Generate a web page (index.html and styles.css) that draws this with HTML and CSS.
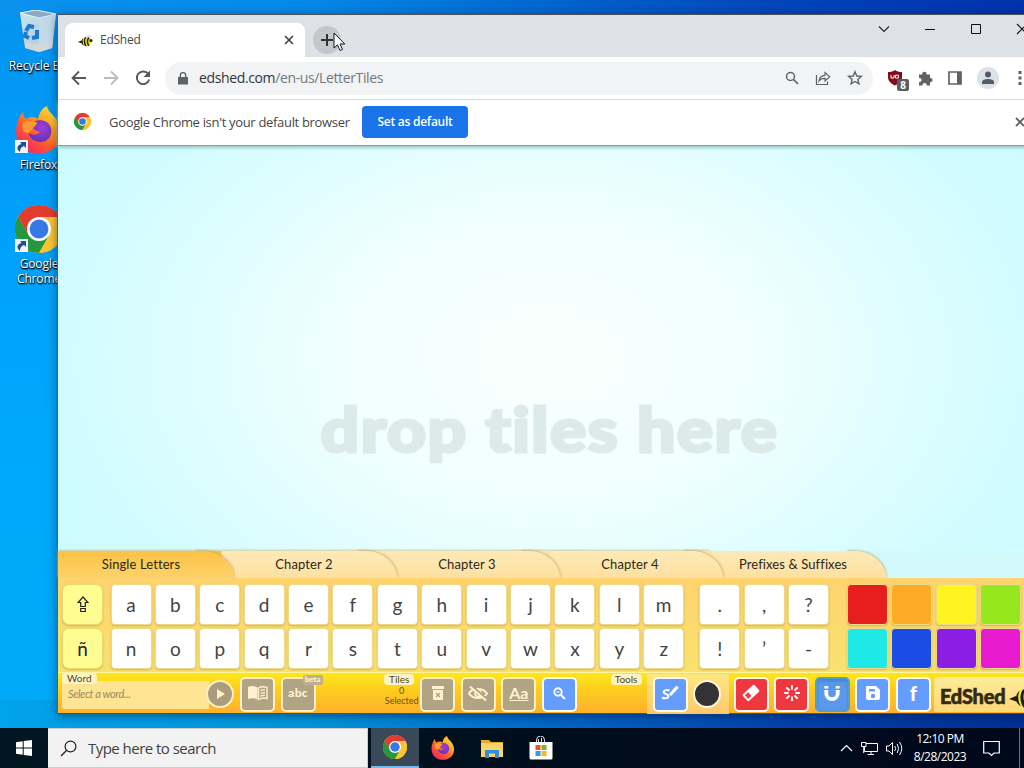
FILE: index.html
```html
<!DOCTYPE html>
<html lang="en">
<head>
<meta charset="utf-8">
<title>EdShed Letter Tiles</title>
<link rel="stylesheet" href="styles.css">
</head>
<body>
<svg class="defs" width="0" height="0">
  <defs>
    <linearGradient id="ffBody" x1="1" y1="0" x2="0.2" y2="1"><stop offset="0" stop-color="#fff04a"/><stop offset=".35" stop-color="#ffae22"/><stop offset=".65" stop-color="#ff5a30"/><stop offset="1" stop-color="#f0246c"/></linearGradient>
    <radialGradient id="ffCore" cx=".6" cy=".35" r=".7"><stop offset="0" stop-color="#a53bd8"/><stop offset="1" stop-color="#5b35b5"/></radialGradient>
    <linearGradient id="bin" x1="0" y1="0" x2="1" y2="1"><stop offset="0" stop-color="#cfe4f0"/><stop offset=".6" stop-color="#b4cfe0"/><stop offset="1" stop-color="#dfe6ea"/></linearGradient>
  </defs>
  <symbol id="chrome" viewBox="0 0 48 48">
    <circle cx="24" cy="24" r="24" fill="#fbc532"/>
    <path d="M3.2 12A24 24 0 0 1 44.8 12H24L13.6 30Z" fill="#e33b2e"/>
    <path d="M3.2 12A24 24 0 0 0 24 48L34.4 30L24 24L13.6 30Z" fill="#24973f"/>
    <path d="M24 48L34.4 30L24 12H44.8A24 24 0 0 1 24 48Z" fill="#fbc532"/>
    <circle cx="24" cy="24" r="12" fill="#fff"/><circle cx="24" cy="24" r="9.4" fill="#3878e4"/>
  </symbol>
  <symbol id="firefox" viewBox="0 0 48 48">
    <path d="M3 15C4 10 7 7 8 6C8 9 9 11 11 13C16 10 20 11 23 13C24 7 27 2 32 0C33 6 38 8 42 14C49 25 47 38 37 44C25 51 8 48 3 35C0 28 1 20 3 15Z" fill="url(#ffBody)"/>
    <path d="M15 20C19 12 33 12 36 22C38 31 31 37 24 36C18 35 14 31 14 27C18 30 22 29 25 26C20 25 19 22 15 20Z" fill="url(#ffCore)"/>
    <path d="M8 17C13 14 19 15 23 17C20 19 20 21 18 22C16 25 15 26 13 27C7 27 7 21 8 17Z" fill="#ff9a2c"/>
  </symbol>
  <symbol id="shortcut" viewBox="0 0 13 13">
    <path d="M0 0H13V13H0Z" fill="#f2f6fa"/><path d="M5 2H11V8L9 6C6 7 5 9 5 12C1 9 2 5 6.5 4Z" fill="#1d4f9a"/>
  </symbol>
  <symbol id="bee" viewBox="0 0 30 24">
    <ellipse cx="22" cy="5" rx="4" ry="5" fill="#dde3dd" transform="rotate(25 22 5)"/>
    <path d="M0 15L7 12C10 5 17 3 23 7C29 11 28 19 23 22C16 25 9 22 6 17Z" fill="#f3e81c"/>
    <path d="M0 15L7 12L8 18L6 17ZM11 6.500C8 11 9 18 12 22.500L9 20C6.500 17 6.500 11 9 8.500ZM17 4.500C13 10 14 18 18 23.500H14.500C10.500 18 10.500 10 14 5.500ZM23 7C19 12 20 18 23 22L20.500 23C16.500 18 16.500 11 20 5.500Z" fill="#1a1a12"/>
    <circle cx="26" cy="12" r="3" fill="#22220f"/>
  </symbol>
</svg>

<div class="desktop">
  <div class="shortcuts">
    <div class="shortcut">
      <svg width="38" height="43" viewBox="0 0 38 43"><path d="M1 3L17 0L37 4L33 38L20 42L6 38Z" fill="url(#bin)"/><path d="M1 3L17 0L37 4L20 8Z" fill="#89abc1" stroke="#e6f2f8"/><path d="M20 8L37 4L33 38L20 42Z" fill="#c4dbea" opacity=".8"/><path d="M6 32L20 35L34 32L33 38L20 42L6 38Z" fill="#d8d8d4" opacity=".8"/><g fill="none" stroke="#1d78cf" stroke-width="4"><path d="M7 21L10 16L15 17"/><path d="M18 20L18 27L13 28"/><path d="M10 28L6 26L7 22"/></g></svg>
      <span class="bin-label">Recycle Bin</span>
    </div>
    <div class="shortcut ff">
      <span class="pic"><svg width="48" height="48"><use href="#firefox"/></svg><svg class="arrow" width="13" height="13"><use href="#shortcut"/></svg></span>
      <span>Firefox</span>
    </div>
    <div class="shortcut gc">
      <span class="pic"><svg width="48" height="48"><use href="#chrome"/></svg><svg class="arrow" width="13" height="13"><use href="#shortcut"/></svg></span>
      <span>Google<br>Chrome</span>
    </div>
  </div>

  <div class="window">
    <div class="tabstrip">
      <div class="tab">
        <svg width="15" height="13" viewBox="0 0 30 24"><use href="#bee"/></svg>
        <span class="tab-title">EdShed</span>
        <svg width="10" height="10" viewBox="0 0 10 10"><path d="M1 1L9 9M9 1L1 9" stroke="#3c4043" stroke-width="1.6"/></svg>
      </div>
      <span class="newtab"><svg width="14" height="14" viewBox="0 0 14 14"><path d="M7 1V13M1 7H13" stroke="#333" stroke-width="2"/></svg></span>
      <div class="winctl">
        <svg width="12" height="12" viewBox="0 0 12 12"><path d="M1 3.5L6 8.5L11 3.5" fill="none" stroke="#222" stroke-width="1.1"/></svg>
        <svg width="12" height="12" viewBox="0 0 12 12"><path d="M1 6.5H11" stroke="#111"/></svg>
        <svg width="12" height="12" viewBox="0 0 12 12"><path d="M1.5 1.5H10.5V10.5H1.5Z" fill="none" stroke="#111"/></svg>
        <svg width="12" height="12" viewBox="0 0 12 12"><path d="M1 1L11 11M11 1L1 11" stroke="#111" stroke-width="1.1"/></svg>
      </div>
    </div>

    <div class="navbar">
      <div class="navbtns">
        <svg width="16" height="16" viewBox="0 0 16 16"><path d="M15 8H2M8 1.5L1.5 8L8 14.5" fill="none" stroke="#55585b" stroke-width="1.8"/></svg>
        <svg width="16" height="16" viewBox="0 0 16 16"><path d="M1 8H14M8 1.5L14.5 8L8 14.5" fill="none" stroke="#b9bbbd" stroke-width="1.8"/></svg>
        <svg width="16" height="16" viewBox="0 0 16 16"><path d="M13.2 4A6.3 6.3 0 1 0 14.2 9.5" fill="none" stroke="#55585b" stroke-width="1.9"/><path d="M15 .5V7H8.5Z" fill="#55585b"/></svg>
      </div>
      <div class="omnibox">
        <svg width="10" height="13" viewBox="0 0 10 13"><path d="M0 5H10V12.5H0Z" fill="#5f6368"/><path d="M2.3 5V3.3A2.7 2.7 0 0 1 7.7 3.3V5" fill="none" stroke="#5f6368" stroke-width="1.4"/></svg>
        <span class="url">edshed.com<i>/en-us/LetterTiles</i></span>
        <svg class="first" width="14" height="14" viewBox="0 0 14 14"><circle cx="5.5" cy="5.5" r="4" fill="none" stroke="#5f6368" stroke-width="1.5"/><path d="M8.5 8.5L13 13" stroke="#5f6368" stroke-width="1.7"/></svg>
        <svg width="16" height="16" viewBox="0 0 16 16"><path d="M1.5 5V14.5H12.5V11.5M4 11C4.5 7 6.5 5.5 10 5.3V2.5L14.8 6.8L10 11V8.3C7.5 8.2 5.5 9 4 11Z" fill="none" stroke="#5f6368" stroke-width="1.2"/></svg>
        <svg width="16" height="16" viewBox="0 0 16 16"><path d="M8 1.8L9.8 6L14.3 6.4L10.9 9.4L11.9 13.8L8 11.5L4.1 13.8L5.1 9.4L1.7 6.4L6.2 6Z" fill="none" stroke="#5f6368" stroke-width="1.4"/></svg>
      </div>
      <div class="exts">
        <span class="ublock"><svg width="14" height="16" viewBox="0 0 14 16"><path d="M7 0C9 1.5 11 2 14 2V7C14 11 11 13.500 7 15.500C3 13.500 0 11 0 7V2C3 2 5 1.500 7 0Z" fill="#800d17"/><path d="M3 5V8H6V5M7.500 5.200H10.500V8H7.500Z" fill="none" stroke="#fff"/></svg><b>8</b></span>
        <svg width="15" height="15" viewBox="0 0 15 15"><path d="M1 3.500H4.200V3A2.200 2.200 0 0 1 8.600 3V3.500H12V7H12.500A2.100 2.100 0 0 1 12.500 11.200H12V14.500H8.700V14A2.100 2.100 0 0 0 4.500 14V14.500H1V11H1.500A2 2 0 0 0 1.500 7H1Z" fill="#5f6368"/></svg>
        <svg width="14" height="14" viewBox="0 0 14 14"><path d="M1 1H13V13H1Z" fill="none" stroke="#5f6368" stroke-width="1.700"/><path d="M9 1H13V13H9Z" fill="#5f6368"/></svg>
        <svg width="22" height="22" viewBox="0 0 22 22"><circle cx="11" cy="11" r="11" fill="#dde1e8"/><circle cx="11" cy="7.500" r="3" fill="#555b64"/><path d="M5 17V15C5 11 17 11 17 15V17Z" fill="#555b64"/></svg>
        <svg class="menu" width="4" height="14" viewBox="0 0 4 14"><path d="M.5 0H3.500V3H.5ZM.5 5.500H3.500V8.500H.5ZM.5 11H3.500V14H.5Z" fill="#5f6368"/></svg>
      </div>
    </div>

    <div class="infobar">
      <svg width="17" height="17"><use href="#chrome"/></svg>
      <span class="info-text">Google Chrome isn't your default browser</span>
      <span class="setdefault">Set as default</span>
      <svg class="dismiss" width="10" height="10" viewBox="0 0 10 10"><path d="M1 1L9 9M9 1L1 9" stroke="#5f6368" stroke-width="1.800"/></svg>
    </div>

    <div class="board"><span class="droptext">drop tiles here</span></div>

    <div class="chapters">
      <span class="chapter on"><span>Single Letters</span></span><span class="chapter"><span>Chapter 2</span></span><span class="chapter"><span>Chapter 3</span></span><span class="chapter"><span>Chapter 4</span></span><span class="chapter"><span>Prefixes &amp; Suffixes</span></span>
    </div>

    <div class="keys">
      <div class="grid mods"><span class="mod"><svg width="12" height="17" viewBox="0 0 12 17"><path d="M6 1L11 6.500H8.300V10.500H3.700V6.500H1ZM3.700 12.500H8.300V15.500H3.700Z" fill="none" stroke="#222" stroke-width="1.200"/></svg></span><span class="mod">ñ</span></div>
      <div class="grid letters"><span>a</span><span>b</span><span>c</span><span>d</span><span>e</span><span>f</span><span>g</span><span>h</span><span>i</span><span>j</span><span>k</span><span>l</span><span>m</span><span>n</span><span>o</span><span>p</span><span>q</span><span>r</span><span>s</span><span>t</span><span>u</span><span>v</span><span>w</span><span>x</span><span>y</span><span>z</span></div>
      <div class="grid punct"><span>.</span><span>,</span><span>?</span><span>!</span><span>’</span><span>-</span></div>
      <div class="grid colors"><span class="c1"></span><span class="c2"></span><span class="c3"></span><span class="c4"></span><span class="c5"></span><span class="c6"></span><span class="c7"></span><span class="c8"></span></div>
    </div>

    <div class="tools">
      <div class="wordbox"><span class="pill">Word</span><em>Select a word...</em></div>
      <span class="play"><svg width="10" height="12" viewBox="0 0 10 12"><path d="M1 1L9 6L1 11Z" fill="#fff3cd"/></svg></span>
      <span class="btn grey"><svg width="20" height="16" viewBox="0 0 20 16"><path d="M0 2C4 .5 7 1 9.500 2.500V14.500C7 13 4 13 0 14Z" fill="#fff3cd"/><path d="M10.500 3C13 1.500 16 1.500 19 2.500V13.500C16 12.500 13 13 10.500 14.500Z" fill="none" stroke="#fff3cd" stroke-width="1.400"/><path d="M12.500 5.500L17 4.700M12.500 8.300L17 7.500M12.500 11L17 10.200" stroke="#fff3cd" stroke-width="1.300"/></svg></span>
      <span class="btn grey abc">abc<b class="beta">beta</b></span>
      <div class="count"><span class="pill">Tiles</span><span>0</span><span>Selected</span></div>
      <span class="btn grey"><svg width="14" height="16" viewBox="0 0 14 16"><path d="M1 1H13V4H1ZM2 5H12V15H2Z" fill="#fff3cd"/><path d="M5 8L9 12M9 8L5 12" stroke="#aca183" stroke-width="1.300"/></svg></span>
      <span class="btn grey"><svg width="20" height="17" viewBox="0 0 20 17"><path d="M1 8.500C4 2.500 15 2.500 19 8.500C15 14.500 5 14.500 1 8.500Z" fill="none" stroke="#fff3cd" stroke-width="2"/><circle cx="10" cy="8.500" r="3" fill="none" stroke="#fff3cd" stroke-width="1.700"/><path d="M4 1L19 14" stroke="#aca183" stroke-width="2"/><path d="M2 1.500L18 15.500" stroke="#fff3cd" stroke-width="2"/></svg></span>
      <span class="btn grey aa">Aa</span>
      <span class="btn blue"><svg width="13" height="13" viewBox="0 0 13 13"><circle cx="5" cy="5" r="3.700" fill="none" stroke="#fff" stroke-width="1.900"/><path d="M8 8L12 12" stroke="#fff" stroke-width="2.200"/><path d="M3.500 5H6.500" stroke="#fff"/></svg></span>
      <span class="pill toolslabel">Tools</span>
      <div class="pen">
        <span class="btn blue"><svg width="18" height="18" viewBox="0 0 18 18"><path d="M8.500 10L15.500 2L17.300 3.800L10 11.500Z" fill="#fff" stroke="#fff"/><path d="M8.500 6.500C5 5.500 2 6.500 2.800 8.500C3.500 10.500 8 10 7.500 12.500C7 14.800 3 14.500 1 13.500" fill="none" stroke="#fff" stroke-width="2"/></svg></span>
        <span class="ink"></span>
      </div>
      <span class="btn red"><svg width="20" height="18" viewBox="0 0 20 18"><g transform="rotate(-42 10 9)"><rect x="2" y="4.500" width="16" height="9" rx="1.500" fill="#fff"/><rect x="4" y="6.500" width="4.500" height="5" fill="#ef3d42"/></g></svg></span>
      <span class="btn red"><svg width="16" height="16" viewBox="0 0 16 16"><path d="M8 0V4.500M8 11.500V16M0 8H4.500M11.500 8H16M2.300 2.300L5.500 5.500M10.500 10.500L13.700 13.700M13.700 2.300L10.500 5.500M5.500 10.500L2.300 13.700" stroke="#fff" stroke-width="1.900"/></svg></span>
      <span class="btn blue pressed"><svg width="16" height="17" viewBox="0 0 16 17"><path d="M2.300 5V8.500A5.700 5.700 0 0 0 13.700 8.500V5" fill="none" stroke="#fff" stroke-width="3.800"/><path d="M.4 1H4.200V3.500H.4ZM11.800 1H15.600V3.500H11.800Z" fill="#fff"/></svg></span>
      <span class="btn blue"><svg width="16" height="16" viewBox="0 0 16 16"><path d="M2 1H11L15 5V13Q15 15 13 15H3Q1 15 1 13V2Q1 1 2 1Z" fill="#fff"/><path d="M4 4H10V6.500H4Z" fill="#659dfc"/><circle cx="8" cy="11" r="2.200" fill="#659dfc"/></svg></span>
      <span class="btn blue fb">f</span>
      <div class="brand"><span>EdShed</span><svg width="30" height="24"><use href="#bee"/></svg></div>
    </div>
  </div>

  <svg class="cursor" width="13" height="20" viewBox="0 0 13 20"><path d="M1 1V16L4.500 12.800L7 18.500L9.500 17.400L7 12H11.800Z" fill="#fff" stroke="#111"/></svg>

  <div class="taskbar">
    <span class="start"><svg width="16" height="16" viewBox="0 0 16 16"><path d="M0 2.300L6.700 1.300V7.500H0ZM7.700 1.100L16 0V7.500H7.700ZM0 8.500H6.700V14.700L0 13.700ZM7.700 8.500H16V16L7.700 14.900Z" fill="#fff"/></svg></span>
    <div class="search"><svg width="17" height="17" viewBox="0 0 17 17"><circle cx="10.500" cy="6.500" r="5.400" fill="none" stroke="#222" stroke-width="1.200"/><path d="M6.700 10.300L1 16" stroke="#222" stroke-width="1.300"/></svg><span>Type here to search</span></div>
    <span class="app active"><svg width="24" height="24"><use href="#chrome"/></svg></span>
    <span class="app"><svg width="24" height="24"><use href="#firefox"/></svg></span>
    <span class="app"><svg width="22" height="19" viewBox="0 0 22 19"><path d="M0 1H8L10 3H22V18H0Z" fill="#e8a82a"/><path d="M0 4H22V18H0Z" fill="#fad36a"/><path d="M4 11H18V19H14V14.500H8V19H4Z" fill="#2f8fd8"/></svg></span>
    <span class="app"><svg width="24" height="24" viewBox="0 0 24 24"><path d="M7.500 6V4A4 4 0 0 1 15.500 4V6M9.500 6V3M12.500 6V2" fill="none" stroke="#dce4ea"/><path d="M.5 6H23.500V22Q23.500 23.500 22 23.500H2Q.5 23.500 .5 22Z" fill="#fff"/><path d="M6.500 9H11.500V14H6.500Z" fill="#ee5428"/><path d="M12.500 9H17.500V14H12.500Z" fill="#7ab51d"/><path d="M6.500 15H11.500V20H6.500Z" fill="#2a9fe0"/><path d="M12.500 15H17.500V20H12.500Z" fill="#f7b61a"/></svg></span>
    <div class="tray">
      <svg width="13" height="8" viewBox="0 0 13 8"><path d="M1 7L6.500 1.500L12 7" fill="none" stroke="#fff" stroke-width="1.200"/></svg>
      <svg width="17" height="15" viewBox="0 0 17 15"><path d="M5 2.500H16.500V10.500H3.500V6M10 10.500V13.500M6.500 13.500H13M.5 1.500H5V5.500H.5ZM2.700 5.500V12" fill="none" stroke="#fff"/></svg>
      <svg width="17" height="15" viewBox="0 0 17 15"><path d="M.5 5H3L6.500 1.500V13.500L3 10H.5ZM8.800 5Q10.500 7.500 8.800 10M11.200 3Q14 7.500 11.200 12M13.500 1Q18 7.500 13.500 14" fill="none" stroke="#fff"/></svg>
      <span class="clock"><span>12:10 PM</span><span>8/28/2023</span></span>
      <svg width="17" height="17" viewBox="0 0 17 17"><path d="M.7 1.500H16.300V13H11L8.500 15.500L6 13H.7Z" fill="none" stroke="#fff" stroke-width="1.200"/></svg>
      <span class="peek"></span>
    </div>
  </div>
</div>
</body>
</html>
```
FILE: styles.css
```css
* { box-sizing: border-box; }
body { margin: 0; font-family: "Open Sans", "Noto Sans", sans-serif; }
svg { display: block; flex: none; }
.defs { position: absolute; }
.desktop {
  position: relative; width: 1024px; height: 768px; overflow: hidden;
  display: flex; flex-direction: column; justify-content: space-between;
  background:
    linear-gradient(90deg, #00a3ec 0, #0096dc 30%, #0069c8 52%, #0045ac 75%, #002f96 100%) 0 700px / 100% 68px no-repeat,
    linear-gradient(90deg, #0a92ee 0, #0589e8 30%, #006bd4 50%, #0046bb 75%, #0032ae 100%) 0 0 / 100% 15px no-repeat,
    linear-gradient(180deg, #0592ee 0, #009df8 20%, #00a8fc 55%, #00aaf8 100%);
}

/* Desktop shortcuts */
.shortcuts { display: flex; flex-direction: column; padding-top: 10px; width: 76px; }
.shortcut { display: flex; flex-direction: column; align-items: center; text-align: center; color: #fff; font: 12px/15px "Open Sans", sans-serif; letter-spacing: -.15px; text-shadow: 1px 1px 2px #000, 0 1px 1px #000; white-space: nowrap; }
.bin-label { margin: 5px 0 0 3px; letter-spacing: -.1px; }
.shortcut.ff { margin-top: 33px; padding-left: 1px; }
.shortcut.gc { margin-top: 33px; padding-left: 2px; }
.pic { position: relative; margin-bottom: 3px; }
.arrow { position: absolute; left: 0; bottom: 1px; }

/* Browser window */
.window {
  position: absolute; left: 57px; top: 14px; width: 984px; height: 700px;
  display: flex; flex-direction: column;
  border: 1px solid #4c5157; border-left-color: #376a89;
  background: #fff; box-shadow: 0 2px 9px rgba(0, 20, 50, .5);
}
.tabstrip { height: 42px; display: flex; background: #dee1e6; }
.tab { width: 240px; margin: 8px 0 0 7px; padding: 0 11px 0 13px; display: flex; align-items: center; background: #fff; border-radius: 8px 8px 0 0; color: #45494d; font-size: 12px; }
.tab-title { flex: 1; margin: -2px 0 0 7px; letter-spacing: -.25px; }
.newtab { width: 28px; height: 28px; margin: 11px 0 0 8px; border-radius: 50%; background: #c3c6ca; display: grid; place-items: center; }
.winctl { display: flex; gap: 34px; margin: 8px 0 0 537px; }
.navbar { height: 43px; display: flex; align-items: center; border-bottom: 1px solid #dadce0; }
.navbtns { display: flex; gap: 16px; margin-left: 13px; }
.omnibox { width: 708px; height: 33px; margin-left: 14px; padding: 0 10px 0 13px; border-radius: 17px; background: #f1f3f4; display: flex; align-items: center; gap: 16px; }
.url { margin: -2px 0 0 -5px; font-size: 14px; color: #333639; white-space: nowrap; letter-spacing: -.37px; }
.url i { font-style: normal; color: #74787c; }
.first { margin-left: auto; }
.exts { display: flex; align-items: center; gap: 15px; margin-left: 15px; }
.ublock { position: relative; margin-right: 1px; }
.ublock b { position: absolute; left: 9px; top: 9px; width: 12px; height: 12px; border-radius: 2px; background: #5c5f60; color: #fff; font-size: 10px; line-height: 12px; text-align: center; }
.exts .menu { margin-left: 4px; }
.infobar { height: 46px; display: flex; align-items: center; padding: 0 0 2px 16px; border-bottom: 1px solid #8c9b9d; position: relative; box-shadow: 0 2px 3px #9ccacb; z-index: 1; }
.info-text { width: 241px; margin-left: 18px; font-size: 13px; color: #45484b; white-space: nowrap; letter-spacing: -.32px; }
.setdefault { width: 106px; height: 32px; margin-left: 12px; border-radius: 4px; background: #1a73e8; color: #fff; font-weight: 600; font-size: 12px; line-height: 32px; text-align: center; letter-spacing: -.25px; }
.dismiss { margin-left: 547px; }

/* Tile board */
.board { height: 405px; display: flex; justify-content: center; padding: 241px 0 0 2px; background: radial-gradient(ellipse 60% 100% at 50% 52%, #fafffd 0, #efffff 38%, #d2fcff 80%, #cbfbff 100%); }
.droptext { font: 900 60px/84px Lato, sans-serif; color: #dcebea; -webkit-text-stroke: 3px #dcebea; letter-spacing: 1.4px; white-space: nowrap; transform: scaleX(1.125); transform-origin: 50% 50%; }
.chapters { height: 27px; display: flex; background: #d2fafc; }
.chapter { width: 163px; position: relative; background: linear-gradient(#fdeab9, #fde0a0); text-align: center; font: 13px/27px Lato, sans-serif; color: #2d2718; padding-left: 3px; letter-spacing: .1px; box-shadow: 0 -1px 2px #d5c995; }
.chapter > span { position: relative; z-index: 2; }
.chapter::after { content: ""; position: absolute; right: -13px; top: 0; width: 40px; height: 27px; background: inherit; border-radius: 0 32px 0 0 / 0 27px 0 0; box-shadow: 1px -1px 2px rgba(190, 155, 75, .55); clip-path: inset(-3px -4px 0 0); }
.chapter:nth-child(1) { z-index: 5; }
.chapter:nth-child(2) { z-index: 4; }
.chapter:nth-child(3) { z-index: 3; }
.chapter:nth-child(4) { z-index: 2; }
.chapter:nth-child(5) { z-index: 1; background: linear-gradient(#fdeab9, #fde0a0) 0 0 / 140px 27px no-repeat; box-shadow: none; }
.chapter:nth-child(5)::after { background: linear-gradient(#fdeab9, #fde0a0); }
.chapter.on { background: linear-gradient(#fcc243, #fdd26b); }
.keys { height: 94px; display: flex; padding: 6px 0 0 4px; background: linear-gradient(#ffd36e, #f8e26f); position: relative; z-index: 6; }
.grid { display: grid; grid-template-columns: repeat(var(--cols), 41px); grid-template-rows: 41px 41px; gap: 3px 3.4px; }
.mods { --cols: 1; }
.letters { --cols: 13; margin-left: 7.500px; }
.punct { --cols: 3; margin-left: 15px; }
.colors { --cols: 4; margin-left: 18px; }
.grid > span { display: grid; place-items: center; border-radius: 4px; background: #fff; border: 1px solid #edda89; box-shadow: 0 1px 2px rgba(155, 120, 40, .4); font: 19px/35px Lato, "Noto Sans", sans-serif; color: #444; }
.grid .mod { background: #fffd91; border-radius: 7px; color: #222; border-color: #e8dc6d; }
.grid .c1 { background: #e71e1e; } .grid .c2 { background: #fdab27; }
.grid .c3 { background: #fff420; } .grid .c4 { background: #96e71e; }
.grid .c5 { background: #1ee9e7; } .grid .c6 { background: #1b4de4; }
.grid .c7 { background: #8b1de4; } .grid .c8 { background: #e91bd1; }

/* Bottom tool row */
.tools { height: 41px; display: flex; align-items: flex-start; padding: 4px 0 0 4px; background: linear-gradient(#fde71d, #fdce1d 40%, #feb02c); border-top: 1px solid #fff5a0; font-family: Lato, sans-serif; position: relative; z-index: 7; }
.btn { width: 35px; height: 35px; border: 2px solid #fffaf0; border-radius: 5px; display: grid; place-items: center; color: #fff; margin-right: 5.6px; padding-bottom: 3px; position: relative; flex: none; }
.grey { background: #b0a484; border-color: #fff0c3; color: #fff3cd; }
.blue { background: #649dfd; }
.red { background: #ef373f; }
.pressed { background: #5998ea; border-color: #4f9ed8; box-shadow: inset 0 2px 3px #4386c5; }
.pill { background: #fff3c4; color: #514728; font-size: 10px; line-height: 11px; border-radius: 4px; padding: 0 5px; }
.wordbox { width: 147px; height: 28px; margin-top: 4px; background: #ffe493; border-radius: 3px 0 0 3px; display: flex; flex-direction: column; align-items: flex-start; flex: none; }
.wordbox .pill { margin-top: -8px; height: 11px; }
.wordbox em { margin: 1px 0 0 6px; font-size: 11px; line-height: 17px; color: #978b62; letter-spacing: -.4px; }
.play { width: 28px; height: 28px; margin: 3px 6px 0 -3px; border: 2px solid #fff0c3; border-radius: 50%; background: #a99d7d; display: grid; place-items: center; padding-left: 1px; flex: none; }
.abc { font: 900 12px/28px Lato, sans-serif; letter-spacing: .3px; }
.beta { position: absolute; right: -9px; top: -4px; width: 20px; height: 10px; border-radius: 2px; background: #bcb08f; font-size: 8px; line-height: 9px; text-align: center; letter-spacing: 0; }
.count { width: 35px; margin: -3px 1px 0 63px; display: flex; flex-direction: column; align-items: center; font-size: 9px; line-height: 9.5px; color: #665021; flex: none; }
.count .pill { margin: 0 5px 1px 0; line-height: 11px; }
.aa { font: 700 16px/28px Lato, sans-serif; text-decoration: underline; text-decoration-thickness: 1px; }
.toolslabel { margin: -3px 0 0 28px; width: 31px; text-align: center; padding: 0; }
.pen { width: 82px; height: 40px; margin: -3px 5px 0 5px; padding: 3px 0 0 6px; display: flex; background: linear-gradient(#fee780, #fdc86d); flex: none; }
.ink { width: 28px; height: 28px; margin-top: 3px; border: 2px solid #fff6da; border-radius: 50%; background: #333; }
.fb { font: 900 20px/28px Lato, sans-serif; margin-right: 3px; }
.brand { flex: 1; height: 35px; padding: 3px 0 0 6px; display: flex; align-items: center; background: linear-gradient(#ffec9b, #ffd777); border-radius: 4px 0 0 0; font-weight: 900; font-size: 20px; color: #332b16; overflow: hidden; letter-spacing: -.25px; -webkit-text-stroke: .6px #332b16; }
.brand svg { margin-left: 4px; -webkit-text-stroke: 0; }

.cursor { position: absolute; left: 333px; top: 32px; z-index: 10; }

/* Taskbar */
.taskbar { height: 40px; display: flex; background: linear-gradient(90deg, #001722, #000d1b 60%, #00081b); position: relative; }
.start { width: 48px; display: grid; place-items: center; }
.search { width: 320px; margin-right: 3px; padding-left: 12px; display: flex; align-items: center; gap: 11px; background: #f2f2f2; border: 1px solid #ccc; border-left: 0; font-size: 15px; color: #414141; letter-spacing: -.53px; }
.app { width: 48.800px; height: 40px; display: grid; place-items: center; }
.app.active { width: 48px; background: #394957; border-bottom: 2px solid #76b9ed; }
.tray { flex: 1; display: flex; align-items: center; justify-content: flex-end; color: #fff; }
.tray > svg { margin-right: 8px; }
.clock { width: 74px; margin: 0 6px 0 -8px; display: flex; flex-direction: column; text-align: center; font-size: 12px; line-height: 18px; letter-spacing: -.5px; }
.tray > svg:last-of-type { margin-right: 19px; }
.peek { width: 5px; height: 40px; border-left: 1px solid #6b7480; }
```
